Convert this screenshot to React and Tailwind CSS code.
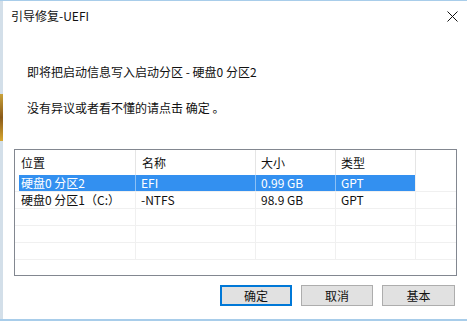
import React from "react";

const font = { fontFamily: '"Noto Sans CJK SC", "Noto Sans", sans-serif' };

function Row({ cells, selected }) {
  return (
    <div className="flex h-[17px] border-b border-[#f0f0f0]">
      <div className={"ml-[4px] flex h-[16px] " + (selected ? "bg-[#3390f0] text-white" : "text-[#111]")}>
        <div className="w-[116px] pl-[2px] leading-[16px]">{cells[0]}</div>
        <div className={"w-[120px] border-l pl-[5px] leading-[16px] " + (selected ? "border-[#8cc0f5]" : "border-[#f0f0f0]")}>{cells[1]}</div>
        <div className={"w-[80px] border-l pl-[5px] leading-[16px] " + (selected ? "border-[#8cc0f5]" : "border-[#f0f0f0]")}>{cells[2]}</div>
        <div className={"w-[80px] border-l pl-[5px] leading-[16px] " + (selected ? "border-[#8cc0f5]" : "border-[#f0f0f0]")}>{cells[3]}</div>
      </div>
      <div className="border-l border-[#f0f0f0]" />
    </div>
  );
}

export default function App() {
  const rows = [
    ["硬盘0 分区2", "EFI", "0.99 GB", "GPT", true],
    ["硬盘0 分区1（C:）", "-NTFS", "98.9 GB", "GPT", false],
    ["", "", "", "", false],
    ["", "", "", "", false],
    ["", "", "", "", false],
  ];
  return (
    <div className="w-[467px] h-[321px] bg-white flex flex-col overflow-hidden text-[12px]" style={font}>
      <div className="h-[1px] bg-[#a8cdea]" />
      <div className="flex flex-1">
        <div className="w-[3px] flex flex-col bg-[#d3dfe9]">
          <div className="h-[93px]" />
          <div className="h-[47px] bg-gradient-to-b from-[#c9a23a] via-[#8a5a18] to-[#d8a830]" />
        </div>
        <div className="flex-1 flex flex-col">
          <div className="h-[30px] flex items-center justify-between pl-[8px] pr-[9px]">
            <span className="text-[12px] text-[#111]">引导修复-UEFI</span>
            <svg width="11" height="11" viewBox="0 0 11 11">
              <path d="M0.5 0.5 L10.5 10.5 M10.5 0.5 L0.5 10.5" stroke="#111" strokeWidth="1" />
            </svg>
          </div>
          <div className="pl-[24px] pt-[33px] text-[#111] leading-[16px]">即将把启动信息写入启动分区 - 硬盘0 分区2</div>
          <div className="pl-[24px] pt-[20px] text-[#111] leading-[16px]">没有异议或者看不懂的请点击 确定 。</div>
          <div className="ml-[11px] mt-[33px] w-[443px] h-[127px] border border-[#828790] bg-white flex flex-col overflow-hidden">
            <div className="h-[25px] shrink-0 flex text-[#111]">
              <div className="w-[121px] pl-[6px] flex items-center border-r border-[#e5e5e5]">位置</div>
              <div className="w-[120px] pl-[6px] flex items-center border-r border-[#e5e5e5]">名称</div>
              <div className="w-[80px] pl-[5px] flex items-center border-r border-[#e5e5e5]">大小</div>
              <div className="w-[80px] pl-[5px] flex items-center border-r border-[#e5e5e5]">类型</div>
            </div>
            {rows.map((r, i) => (
              <Row key={i} cells={r} selected={r[4]} />
            ))}
          </div>
          <div className="flex justify-end gap-[9px] pr-[12px] mt-[9px]">
            <button className="w-[72px] h-[21px] border-2 border-[#0078d7] bg-[#e1e1e1] text-[#111] leading-[16px]">确定</button>
            <button className="w-[72px] h-[21px] border border-[#adadad] bg-[#e1e1e1] text-[#111] leading-[16px]">取消</button>
            <button className="w-[73px] h-[21px] border border-[#adadad] bg-[#e1e1e1] text-[#111] leading-[16px]">基本</button>
          </div>
        </div>
      </div>
      <div className="h-[2px] bg-[#a8cdea]" />
    </div>
  );
}
